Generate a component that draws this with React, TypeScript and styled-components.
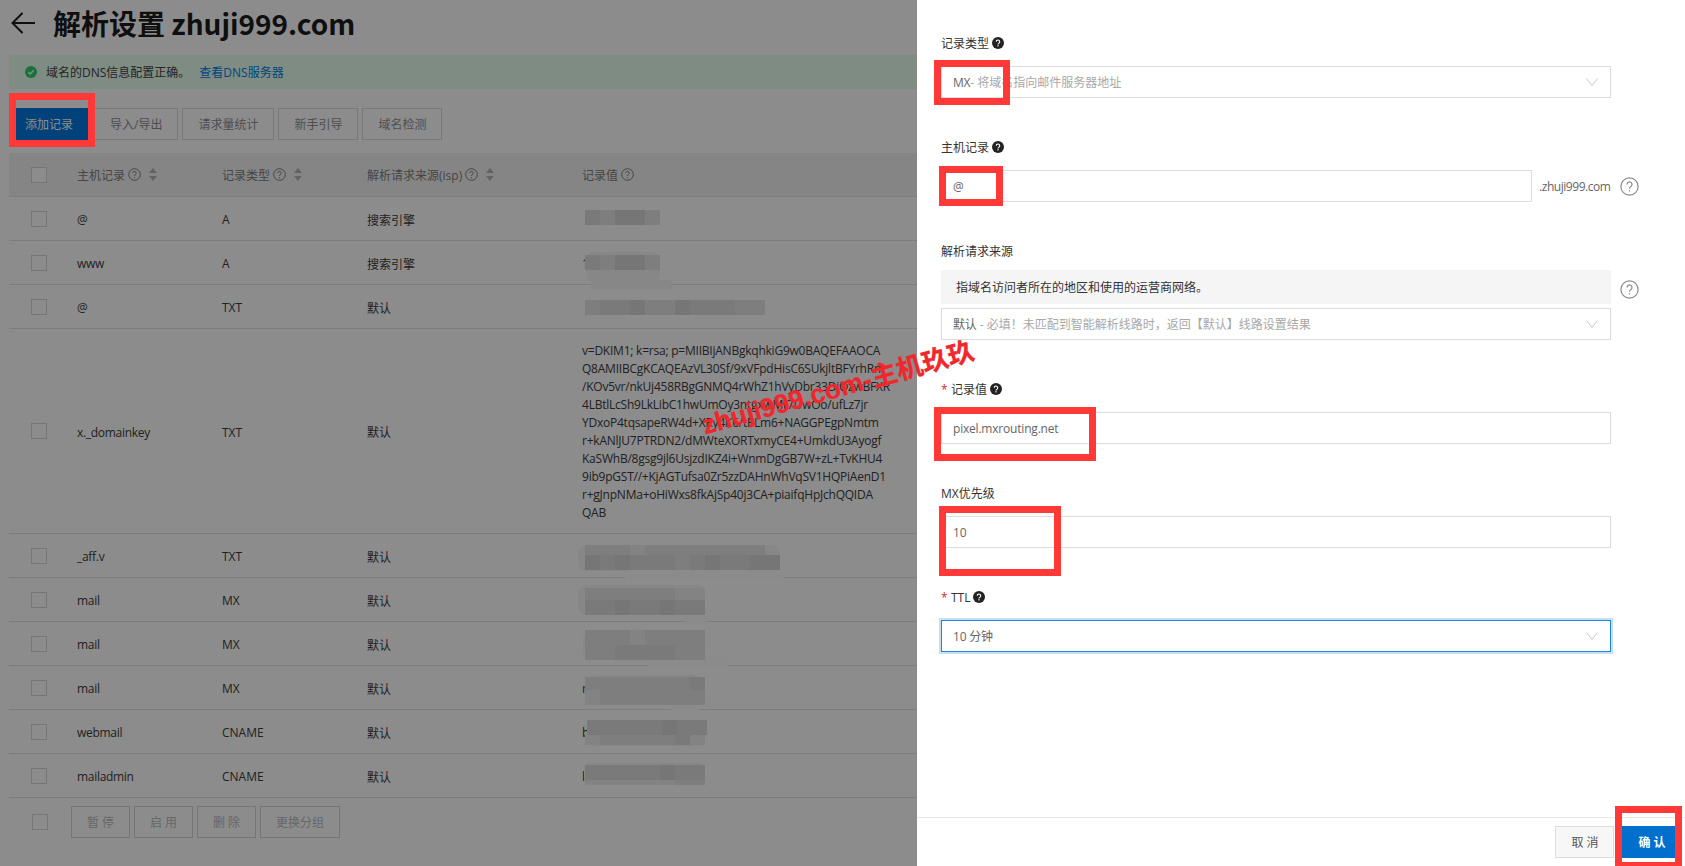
import React from "react";
import styled, { createGlobalStyle } from "styled-components";

const FONT = `"Open Sans", "Noto Sans CJK SC", sans-serif`;

const Global = createGlobalStyle`
  html, body { margin: 0; padding: 0; height: 866px; overflow: hidden; background: #fff; }
  body { font-family: ${FONT}; font-size: 12px; color: #333; }
  * { box-sizing: border-box; }
`;

const Page = styled.div`
  position: relative;
  display: flex;
  width: 1685px;
  height: 866px;
  overflow: hidden;
`;

const Console = styled.main`
  position: relative;
  flex: 0 0 917px;
  height: 866px;
  overflow: hidden;
  background: #fff;
`;

const Scrim = styled.div`
  position: absolute;
  inset: 0;
  z-index: 5;
  background: rgba(0, 0, 0, 0.45);
`;

const TitleBar = styled.header`
  display: flex;
  align-items: center;
  gap: 18px;
  height: 55px;
  padding: 0 0 9px 11px;
`;

const Title = styled.h1`
  margin: 0;
  font-size: 28px;
  line-height: 32px;
  font-weight: 700;
  color: #1c1c1c;
  font-family: "Noto Sans CJK SC", "Open Sans", sans-serif;
  white-space: nowrap;
`;

const Alert = styled.div`
  display: flex;
  align-items: center;
  height: 34px;
  margin-left: 9px;
  padding-left: 16px;
  background: #e7fff1;
  color: #444;
`;

const AlertText = styled.span`
  margin-left: 9px;
`;

const AlertLink = styled.a`
  margin-left: 9px;
  color: #0080e0;
`;

const Toolbar = styled.div`
  display: flex;
  gap: 4px;
  padding: 19px 0 13px 16px;
`;

const ToolButton = styled.button<{ $primary?: boolean }>`
  height: 32px;
  padding: ${(p) => (p.$primary ? "0 16px 0 8px" : "0 15px")};
  border: 1px solid ${(p) => (p.$primary ? "#0078dc" : "#dcdcdc")};
  background: ${(p) => (p.$primary ? "#0078dc" : "#fff")};
  color: ${(p) => (p.$primary ? "#fff" : "#8f8f8f")};
  font: inherit;
  white-space: nowrap;
`;

const Table = styled.section`
  margin-left: 9px;
  width: 1100px;
`;

const RowBase = styled.div`
  display: grid;
  grid-template-columns: 68px 145px 145px 215px 1fr;
  align-items: center;
  border-bottom: 1px solid #e3e3e3;
`;

const HeadRow = styled(RowBase)`
  height: 44px;
  background: #f2f2f2;
  color: #808080;
`;

const Row = styled(RowBase)<{ $height: number }>`
  height: ${(p) => p.$height}px;
  color: #3c3c3c;
`;

const CheckCell = styled.div`
  padding-left: 22px;
  display: flex;
`;

const Checkbox = styled.span`
  display: block;
  width: 16px;
  height: 16px;
  border: 1px solid #d8d8d8;
  background: #fff;
`;

const HeadLabel = styled.div`
  display: flex;
  align-items: center;
  white-space: nowrap;
`;

const HeadHelp = styled.svg`
  margin-left: 3px;
  flex: none;
`;

const SortMark = styled.svg`
  margin-left: 8px;
  flex: none;
`;

const Cell = styled.div<{ $tight?: boolean }>`
  padding-top: 2px;
  letter-spacing: ${(p) => (p.$tight ? -0.3 : 0)}px;
`;

const ValueCell = styled.div`
  position: relative;
  align-self: stretch;
  display: flex;
  align-items: center;
  padding-top: 1px;
`;

const ValueLines = styled.div`
  line-height: 18px;
  font-size: 12px;
  white-space: nowrap;
  letter-spacing: -0.23px;
`;

const Line = styled.div``;

const BlurLayer = styled.svg`
  position: absolute;
  left: -12px;
  top: -12px;
  z-index: 1;
  pointer-events: none;
`;

const BulkBar = styled.div`
  display: flex;
  align-items: center;
  padding: 8px 0 0 23px;
`;

const BulkButtons = styled.div`
  display: flex;
  gap: 4px;
  margin-left: 23px;
`;

const BulkButton = styled.button<{ $w: number }>`
  width: ${(p) => p.$w}px;
  height: 32px;
  padding: 0 0 0 ${(p) => (p.$w < 70 ? 3 : 0)}px;
  border: 1px solid #d6d6d6;
  background: #fff;
  color: #bcbcbc;
  font: inherit;
  letter-spacing: ${(p) => (p.$w < 70 ? 3 : 0)}px;
`;

const Panel = styled.aside`
  flex: 0 0 768px;
  height: 866px;
  display: flex;
  flex-direction: column;
  background: #fff;
`;

const Form = styled.div`
  flex: 1;
  padding: 34px 0 0 24px;
`;

const Field = styled.div`
  margin-bottom: 40px;
`;

const FieldLabel = styled.label<{ $tight?: boolean }>`
  display: flex;
  align-items: center;
  height: 18px;
  margin-bottom: ${(p) => (p.$tight ? 10 : 14)}px;
  color: #333;
  white-space: nowrap;
`;

const Required = styled.span`
  width: 10px;
  color: #e2231a;
  font-size: 12px;
  flex: none;
`;

const LabelHelp = styled.svg`
  margin-left: 3px;
  flex: none;
`;

const ControlRow = styled.div`
  display: flex;
  align-items: center;
`;

const Control = styled.div<{ $w?: number; $focus?: boolean }>`
  display: flex;
  align-items: center;
  justify-content: space-between;
  width: ${(p) => p.$w ?? 670}px;
  height: 32px;
  padding: 0 12px 0 11px;
  border: 1px solid ${(p) => (p.$focus ? "#2486d9" : "#dcdcdc")};
  box-shadow: ${(p) => (p.$focus ? "0 0 0 2px #c5dff3" : "none")};
  color: #666;
  letter-spacing: -0.2px;
  white-space: nowrap;
`;

const Muted = styled.span`
  color: #a8a8a8;
  letter-spacing: 0;
`;

const Suffix = styled.span`
  margin-left: 7px;
  width: 72px;
  color: #666;
  letter-spacing: -0.45px;
  white-space: nowrap;
`;

const HelpRing = styled.svg<{ $gap: number }>`
  margin-left: ${(p) => p.$gap}px;
  flex: none;
`;

const InfoBox = styled.div`
  display: flex;
  align-items: center;
  width: 670px;
  height: 34px;
  padding-left: 15px;
  margin-bottom: 4px;
  background: #f5f5f5;
  color: #333;
`;

const InfoWrap = styled.div`
  display: flex;
  align-items: center;
`;

const Footer = styled.footer`
  display: flex;
  justify-content: flex-end;
  align-items: center;
  gap: 8px;
  height: 49px;
  padding-right: 4px;
  border-top: 1px solid #e8e8e8;
`;

const FootButton = styled.button<{ $primary?: boolean }>`
  width: 59px;
  height: 32px;
  padding: 0 0 0 4px;
  border: 1px solid ${(p) => (p.$primary ? "#0070cc" : "#dcdcdc")};
  background: ${(p) => (p.$primary ? "#0070cc" : "#f7f7f7")};
  color: ${(p) => (p.$primary ? "#fff" : "#555")};
  font: inherit;
  font-weight: ${(p) => (p.$primary ? 700 : 400)};
  letter-spacing: 3px;
`;

const RedFrame = styled.div<{ $x: number; $y: number; $w: number; $h: number }>`
  position: absolute;
  z-index: 10;
  left: ${(p) => p.$x}px;
  top: ${(p) => p.$y}px;
  width: ${(p) => p.$w}px;
  height: ${(p) => p.$h}px;
  border: 7px solid #ff3838;
`;

const Watermark = styled.div`
  position: absolute;
  z-index: 11;
  left: 838px;
  top: 388px;
  transform: translate(-50%, -50%) rotate(-15.6deg);
  font-family: "Liberation Sans", "Noto Sans CJK SC", sans-serif;
  font-weight: 700;
  font-size: 26.5px;
  line-height: 32px;
  color: #f0272c;
  -webkit-text-stroke: 0.3px #f0272c;
  white-space: nowrap;
`;

const ArrowIcon = () => (
  <svg width="24" height="22" viewBox="0 0 24 22" fill="none" stroke="#1c1c1c" strokeWidth="2">
    <path d="M24 11H2M11.5 1 1.5 11l10 10" />
  </svg>
);

const OkIcon = () => (
  <svg width="12" height="12" viewBox="0 0 12 12">
    <circle cx="6" cy="6" r="6" fill="#30d06c" />
    <path d="M3.2 6.2 5.2 8 8.8 4.2" fill="none" stroke="#fff" strokeWidth="1.3" />
  </svg>
);

const OutlineHelp = () => (
  <HeadHelp width="13" height="13" viewBox="0 0 13 13" fill="none" stroke="#808080" strokeWidth="1">
    <circle cx="6.5" cy="6.5" r="5.8" />
    <path d="M4.8 5.1a1.7 1.7 0 1 1 2.7 1.4c-.6.4-1 .7-1 1.5M6.5 9.2v1" />
  </HeadHelp>
);

const Sort = () => (
  <SortMark width="8" height="13" viewBox="0 0 8 13" fill="#b4b4b4">
    <path d="M4 0 8 5H0zM0 8h8l-4 5z" />
  </SortMark>
);

const SolidHelp = () => (
  <LabelHelp width="12" height="12" viewBox="0 0 12 12">
    <circle cx="6" cy="6" r="6" fill="#222" />
    <path d="M4.3 4.8a1.7 1.7 0 1 1 2.7 1.3c-.6.4-1 .7-1 1.4" fill="none" stroke="#fff" strokeWidth="1.1" />
    <rect x="5.4" y="8.2" width="1.2" height="1.2" fill="#fff" />
  </LabelHelp>
);

const BigHelp = ({ gap }: { gap: number }) => (
  <HelpRing $gap={gap} width="19" height="19" viewBox="0 0 19 19" fill="none" stroke="#8a8a8a" strokeWidth="1.2">
    <circle cx="9.5" cy="9.5" r="8.6" />
    <path d="M7 7.4a2.5 2.5 0 1 1 3.9 2.1c-.9.6-1.4 1-1.4 2.2M9.5 13.3v1.3" />
  </HelpRing>
);

const Chevron = () => (
  <svg width="12" height="8" viewBox="0 0 12 8" fill="none" stroke="#c4c4c4" strokeWidth="1">
    <path d="M.5.5 6 7.5 11.5.5" />
  </svg>
);

const SHADES: Record<string, string> = {
  D: "#d8d8d8",
  E: "#dedede",
  M: "#e5e5e5",
  L: "#eeeeee",
  S: "#f6f6f6",
  W: "#fdfdfd",
};

type Band = [x: number, y: number, h: number, cells: string];
type Smudge = [x: number, y: number, w: number, h: number, r: number];
type BlurSpec = { smudges: Smudge[]; bands: Band[] };

const Blur = ({ top, spec }: { top: number; spec: BlurSpec }) => (
  <BlurLayer width="240" height="90" viewBox={`570 ${top - 12} 240 90`}>
    {spec.smudges.map(([x, y, w, h, r], i) => (
      <rect key={`s${i}`} x={x} y={y} width={w} height={h} rx={r} fill={i === 0 ? SHADES.S : SHADES.W} />
    ))}
    {spec.bands.map(([x, y, h, cells], i) =>
      cells
        .split("")
        .map((c, j) => <rect key={`${i}-${j}`} x={x + j * 15} y={y} width="15" height={h} fill={SHADES[c]} />)
    )}
  </BlurLayer>
);

const KEY = [
  "v=DKIM1; k=rsa; p=MIIBIjANBgkqhkiG9w0BAQEFAAOCA",
  "Q8AMIIBCgKCAQEAzVL30Sf/9xVFpdHisC6SUkjltBFYrhRm",
  "/KOv5vr/nkUj458RBgGNMQ4rWhZ1hVyDbr33DiOzwBFXR",
  "4LBtlLcSh9LkLibC1hwUmOy3ntgxwMt7UwOo/ufLz7jr",
  "YDxoP4tqsapeRW4d+XRy4K6/tPLm6+NAGGPEgpNmtm",
  "r+kANlJU7PTRDN2/dMWteXORTxmyCE4+UmkdU3Ayogf",
  "KaSWhB/8gsg9jl6UsjzdIKZ4i+WnmDgGB7W+zL+TvKHU4",
  "9ib9pGST//+KjAGTufsa0Zr5zzDAHnWhVqSV1HQPiAenD1",
  "r+gJnpNMa+oHiWxs8fkAjSp40j3CA+piaifqHpJchQQIDA",
  "QAB",
];

type RowData = {
  host: string;
  type: string;
  isp: string;
  value?: string;
  lines?: string[];
  height: number;
  top: number;
  blur?: BlurSpec;
};

const ROWS: RowData[] = [
  {
    host: "@", type: "A", isp: "搜索引擎", height: 44, top: 197,
    blur: { smudges: [], bands: [[585, 210, 15, "EMDDM"]] },
  },
  {
    host: "www", type: "A", isp: "搜索引擎", value: "1", height: 44, top: 241,
    blur: {
      smudges: [[586, 252, 74, 30, 8]],
      bands: [[585, 255, 15, "EMDDM"]],
    },
  },
  {
    host: "@", type: "TXT", isp: "默认", height: 44, top: 285,
    blur: {
      smudges: [[591, 280, 81, 10, 4]],
      bands: [[585, 300, 15, "MEEDMMDEEEMM"]],
    },
  },
  { host: "x._domainkey", type: "TXT", isp: "默认", lines: KEY, height: 205, top: 329 },
  {
    host: "_aff.v", type: "TXT", isp: "默认", height: 44, top: 534,
    blur: {
      smudges: [[578, 545, 202, 26, 8], [625, 570, 160, 10, 4]],
      bands: [
        [585, 545, 10, "MMMLMMMMMMMM"],
        [585, 555, 15, "DEDEEEMEDEEDD"],
      ],
    },
  },
  {
    host: "mail", type: "MX", isp: "默认", height: 44, top: 578,
    blur: {
      smudges: [[578, 585, 127, 30, 8], [686, 612, 20, 12, 2]],
      bands: [
        [585, 588, 12, "MMMMMMLL"],
        [585, 600, 15, "EEDEEDEE"],
      ],
    },
  },
  {
    host: "mail", type: "MX", isp: "默认", height: 44, top: 622,
    blur: {
      smudges: [[583, 630, 122, 30, 10], [647, 655, 82, 13, 4]],
      bands: [
        [585, 630, 15, "MMMLMMMM"],
        [585, 645, 15, "MMEEEEMM"],
      ],
    },
  },
  {
    host: "mail", type: "MX", isp: "默认", value: "r", height: 44, top: 666,
    blur: {
      smudges: [[585, 675, 120, 30, 12], [671, 700, 28, 12, 2]],
      bands: [
        [585, 677, 13, "MMMMMMME"],
        [585, 690, 15, "LMMMMMMM"],
      ],
    },
  },
  {
    host: "webmail", type: "CNAME", isp: "默认", value: "b", height: 44, top: 710,
    blur: {
      smudges: [[587, 720, 118, 26, 8]],
      bands: [
        [587, 720, 15, "EEEEEDEE"],
        [585, 735, 10, "LMMMMMEL"],
      ],
    },
  },
  {
    host: "mailadmin", type: "CNAME", isp: "默认", value: "b", height: 44, top: 754,
    blur: {
      smudges: [[584, 763, 121, 22, 6]],
      bands: [
        [585, 765, 15, "EEEEEDEE"],
        [585, 780, 5, "LLLLLLMM"],
      ],
    },
  },
];

const Head = ({ label, help = true, sort = true }: { label: string; help?: boolean; sort?: boolean }) => (
  <HeadLabel>
    {label}
    {help && <OutlineHelp />}
    {sort && <Sort />}
  </HeadLabel>
);

export default function App() {
  return (
    <Page>
      <Global />
      <Console>
        <TitleBar>
          <ArrowIcon />
          <Title>解析设置 zhuji999.com</Title>
        </TitleBar>
        <Alert>
          <OkIcon />
          <AlertText>域名的DNS信息配置正确。</AlertText>
          <AlertLink>查看DNS服务器</AlertLink>
        </Alert>
        <Toolbar>
          <ToolButton $primary>添加记录</ToolButton>
          <ToolButton>导入/导出</ToolButton>
          <ToolButton>请求量统计</ToolButton>
          <ToolButton>新手引导</ToolButton>
          <ToolButton>域名检测</ToolButton>
        </Toolbar>
        <Table>
          <HeadRow>
            <CheckCell><Checkbox /></CheckCell>
            <Head label="主机记录" />
            <Head label="记录类型" />
            <Head label="解析请求来源(isp)" />
            <Head label="记录值" sort={false} />
          </HeadRow>
          {ROWS.map((r) => (
            <Row key={r.top} $height={r.height}>
              <CheckCell><Checkbox /></CheckCell>
              <Cell $tight>{r.host}</Cell>
              <Cell>{r.type}</Cell>
              <Cell>{r.isp}</Cell>
              <ValueCell>
                {r.value}
                {r.lines && (
                  <ValueLines>
                    {r.lines.map((l) => (
                      <Line key={l}>{l}</Line>
                    ))}
                  </ValueLines>
                )}
                {r.blur && <Blur top={r.top} spec={r.blur} />}
              </ValueCell>
            </Row>
          ))}
          <BulkBar>
            <Checkbox />
            <BulkButtons>
              <BulkButton $w={59}>暂停</BulkButton>
              <BulkButton $w={59}>启用</BulkButton>
              <BulkButton $w={59}>删除</BulkButton>
              <BulkButton $w={80}>更换分组</BulkButton>
            </BulkButtons>
          </BulkBar>
        </Table>
        <Scrim />
      </Console>

      <Panel>
        <Form>
          <Field>
            <FieldLabel>记录类型<SolidHelp /></FieldLabel>
            <Control>
              <span>MX<Muted>- 将域名指向邮件服务器地址</Muted></span>
              <Chevron />
            </Control>
          </Field>
          <Field>
            <FieldLabel>主机记录<SolidHelp /></FieldLabel>
            <ControlRow>
              <Control $w={591}>@</Control>
              <Suffix>.zhuji999.com</Suffix>
              <BigHelp gap={9} />
            </ControlRow>
          </Field>
          <Field>
            <FieldLabel $tight>解析请求来源</FieldLabel>
            <InfoWrap>
              <InfoBox>指域名访问者所在的地区和使用的运营商网络。</InfoBox>
              <BigHelp gap={9} />
            </InfoWrap>
            <Control>
              <span>默认<Muted> - 必填！未匹配到智能解析线路时，返回【默认】线路设置结果</Muted></span>
              <Chevron />
            </Control>
          </Field>
          <Field>
            <FieldLabel><Required>*</Required>记录值<SolidHelp /></FieldLabel>
            <Control>pixel.mxrouting.net</Control>
          </Field>
          <Field>
            <FieldLabel>MX优先级</FieldLabel>
            <Control>10</Control>
          </Field>
          <Field>
            <FieldLabel><Required>*</Required>TTL<SolidHelp /></FieldLabel>
            <Control $focus>
              <span>10 分钟</span>
              <Chevron />
            </Control>
          </Field>
        </Form>
        <Footer>
          <FootButton>取消</FootButton>
          <FootButton $primary>确认</FootButton>
        </Footer>
      </Panel>

      <RedFrame $x={9} $y={93} $w={86} $h={54} />
      <RedFrame $x={934} $y={60} $w={76} $h={45} />
      <RedFrame $x={939} $y={166} $w={64} $h={40} />
      <RedFrame $x={934} $y={407} $w={162} $h={54} />
      <RedFrame $x={939} $y={506} $w={122} $h={70} />
      <RedFrame $x={1615} $y={806} $w={67} $h={63} />
      <Watermark>zhuji999.com-主机玖玖</Watermark>
    </Page>
  );
}
